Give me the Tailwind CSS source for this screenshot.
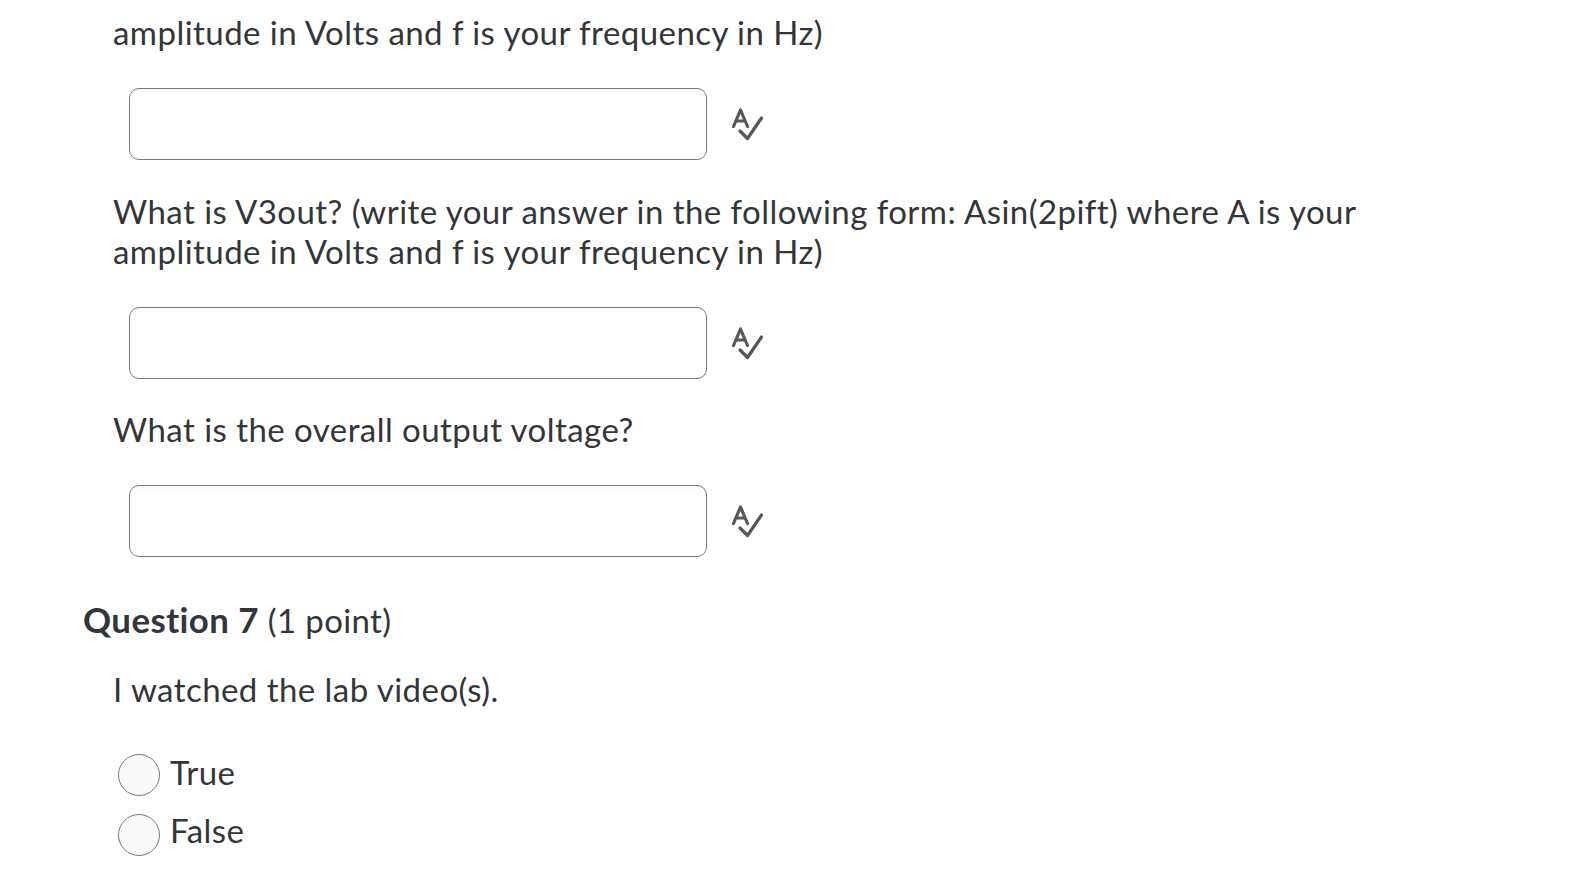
<!DOCTYPE html>
<html>
<head>
<meta charset="utf-8">
<script src="https://cdn.jsdelivr.net/npm/@tailwindcss/browser@4"></script>
</head>
<body class="bg-white overflow-hidden font-['Lato',sans-serif] text-[#333638] tracking-[0.45px]">
<div class="pl-[83px] pt-[12px] w-[1585px] h-[869px] overflow-hidden">
    <div class="pl-[30px] w-[1320px]">
        <p class="text-[33px] leading-[40px]">amplitude in Volts and f is your frequency in Hz)</p>
        <!-- answer 1 -->
        <div class="flex items-center mt-[36px] ml-[16px]">
            <div class="w-[578px] h-[72px] rounded-[10px] border border-[#77797b] bg-gradient-to-b from-[#f9fafb] to-white to-10%"></div>
            <svg class="ml-[24px] mt-[2px]" width="34" height="36" viewBox="0 0 34 36" fill="none" stroke="#55585b" stroke-width="3.2" stroke-linecap="round" stroke-linejoin="round"><path d="M2.5 19.5 L9.5 3 L16.5 19.5 M5 14 H14"/><path d="M9 24 L16.5 31.5 L30.5 11"/></svg>
        </div>
        <p class="text-[33px] leading-[40px] mt-[31px]">What is V3out? (write your answer in the following form: Asin(2pift) where A is your amplitude in Volts and f is your frequency in Hz)</p>
        <!-- answer 2 -->
        <div class="flex items-center mt-[36px] ml-[16px]">
            <div class="w-[578px] h-[72px] rounded-[10px] border border-[#77797b] bg-gradient-to-b from-[#f9fafb] to-white to-10%"></div>
            <svg class="ml-[24px] mt-[2px]" width="34" height="36" viewBox="0 0 34 36" fill="none" stroke="#55585b" stroke-width="3.2" stroke-linecap="round" stroke-linejoin="round"><path d="M2.5 19.5 L9.5 3 L16.5 19.5 M5 14 H14"/><path d="M9 24 L16.5 31.5 L30.5 11"/></svg>
        </div>
        <p class="text-[33px] leading-[40px] mt-[30px]">What is the overall output voltage?</p>
        <!-- answer 3 -->
        <div class="flex items-center mt-[36px] ml-[16px]">
            <div class="w-[578px] h-[72px] rounded-[10px] border border-[#77797b] bg-gradient-to-b from-[#f9fafb] to-white to-10%"></div>
            <svg class="ml-[24px] mt-[2px]" width="34" height="36" viewBox="0 0 34 36" fill="none" stroke="#55585b" stroke-width="3.2" stroke-linecap="round" stroke-linejoin="round"><path d="M2.5 19.5 L9.5 3 L16.5 19.5 M5 14 H14"/><path d="M9 24 L16.5 31.5 L30.5 11"/></svg>
        </div>
    </div>
    <h2 class="text-[33px] leading-[40px] mt-[43px]"><span class="font-bold text-[34.8px]">Question 7</span> <span class="tracking-[0.35px]">(1 point)</span></h2>
    <div class="pl-[30px]">
        <p class="text-[33px] leading-[40px] mt-[29px]">I watched the lab video(s).</p>
        <div class="mt-[45px] flex flex-col gap-[18px] pl-[5px]">
            <label class="flex items-center gap-[10px] h-[42px]">
                <span class="w-[42px] h-[42px] rounded-full border border-[#77797b] bg-[#f9fafb]"></span>
                <span class="text-[33px] leading-[40px] -mt-[6px]">True</span>
            </label>
            <label class="flex items-center gap-[10px] h-[42px]">
                <span class="w-[42px] h-[42px] rounded-full border border-[#77797b] bg-[#f9fafb]"></span>
                <span class="text-[33px] leading-[40px] -mt-[10px]">False</span>
            </label>
        </div>
    </div>
</div>
</body>
</html>
